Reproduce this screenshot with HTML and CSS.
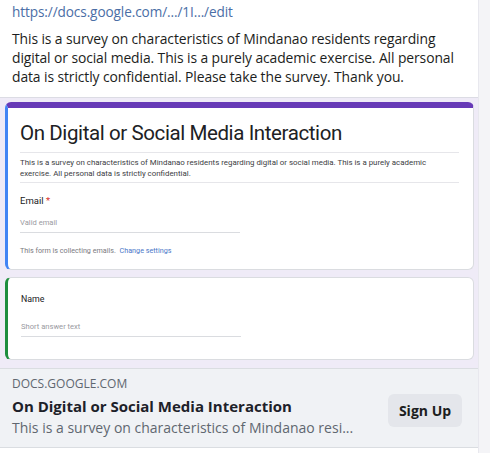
FILE: index.html
```html
<!DOCTYPE html>
<html>
<head>
<meta charset="utf-8">
<link rel="stylesheet" href="styles.css">
</head>
<body>
<div class="page">
  <div class="post">
    <div class="message">
      <a class="link">https://docs.google.com/.../1I.../edit</a>
      <p class="text">This is a survey on characteristics of Mindanao residents regarding digital or social media. This is a purely academic exercise. All personal data is strictly confidential. Please take the survey. Thank you.</p>
    </div>
    <div class="shot">
      <div class="card card-head">
        <h1 class="form-title">On Digital or Social Media Interaction</h1>
        <div class="desc-wrap"><p class="form-desc">This is a survey on characteristics of Mindanao residents regarding digital or social media. This is a purely academic exercise. All personal data is strictly confidential.</p></div>
        <div class="q-label">Email <span class="req">*</span></div>
        <div class="input">Valid email</div>
        <div class="note">This form is collecting emails. <span class="note-link">Change settings</span></div>
      </div>
      <div class="card card-q">
        <div class="q-label">Name</div>
        <div class="input">Short answer text</div>
      </div>
    </div>
    <div class="preview">
      <div class="preview-info">
        <div class="domain">DOCS.GOOGLE.COM</div>
        <div class="p-title">On Digital or Social Media Interaction</div>
        <div class="p-desc">This is a survey on characteristics of Mindanao resi...</div>
      </div>
      <button class="btn">Sign Up</button>
    </div>
  </div>
  <div class="side"></div>
</div>
</body>
</html>
```
FILE: styles.css
```css
* { box-sizing: border-box; }
html, body { margin: 0; padding: 0; background: #ffffff; }
body { font-family: "Open Sans", "Noto Sans", sans-serif; }

.page { display: flex; width: 490px; height: 453px; }
.post { width: 478px; display: flex; flex-direction: column; }
.side { flex: 1; background: #f4f4f7; border-left: 1px solid #e8e8ee; }

.message { padding: 2px 10px 0 12px; height: 97px; }
.link { display: block; color: #4b6ea6; font-size: 13.6px; line-height: 19px; letter-spacing: -0.1px; }
.text { margin: 8px 0 0 0; color: #1c1e21; font-size: 13.9px; line-height: 19px; letter-spacing: -0.1px; }

.shot { background: #efebf7; border-top: 1px solid #dcdce4; padding: 4px 4px 8px 5px; display: flex; flex-direction: column; gap: 7px; height: 271px; }
.card { background: #fff; border-radius: 6px; border: 1px solid #dadce0; }
.card-head { border-top: 6px solid #673ab7; border-left: 3px solid #4285f4; padding: 12px 14px 12px 12px; height: 169px; }
.card-q { border-left: 3px solid #1e8e3e; padding: 16px 14px 0 13px; height: 84px; }

.form-title { margin: 0; font-family: Roboto, "Noto Sans", sans-serif; font-weight: 400; font-size: 20.5px; letter-spacing: -0.4px; line-height: 26px; color: #202124; padding-bottom: 6px; border-bottom: 1px solid #e6e6ea; }
.desc-wrap { border-bottom: 1px solid #e6e6ea; padding: 4px 0 3px; }
.form-desc { margin: 0; max-width: 418px; font-family: Roboto, sans-serif; font-size: 7.9px; line-height: 11px; color: #3c4043; }
.q-label { font-family: Roboto, sans-serif; font-size: 9.5px; color: #202124; margin-top: 12px; }
.card-q .q-label { margin-top: 0; font-size: 8.8px; }
.req { color: #d93025; }
.input { font-family: Roboto, sans-serif; font-size: 7.6px; color: #9a9a9f; width: 220px; border-bottom: 1px solid #dadce0; padding: 12px 0 5px; }
.card-q .input { margin-top: 12px; padding-top: 6px; }
.note { font-family: Roboto, sans-serif; font-size: 7.2px; color: #7a7a80; margin-top: 13px; }
.note-link { color: #4a77c8; margin-left: 2px; }

.preview { background: #f0f2f5; border-top: 1px solid #dadde1; border-bottom: 1px solid #dadde1; height: 80px; display: flex; align-items: center; padding: 0 16px 4px 12px; }
.preview-info { flex: 1; min-width: 0; }
.domain { font-size: 12px; color: #606770; line-height: 20px; }
.p-title { font-size: 15px; font-weight: 700; color: #1d2129; line-height: 24px; }
.p-desc { font-size: 14px; color: #606770; line-height: 20px; }
.btn { border: none; background: #e4e6eb; border-radius: 6px; font-family: "Open Sans", sans-serif; font-weight: 700; font-size: 14px; color: #1c1e21; width: 74px; height: 33px; margin-top: 8px; }
```
